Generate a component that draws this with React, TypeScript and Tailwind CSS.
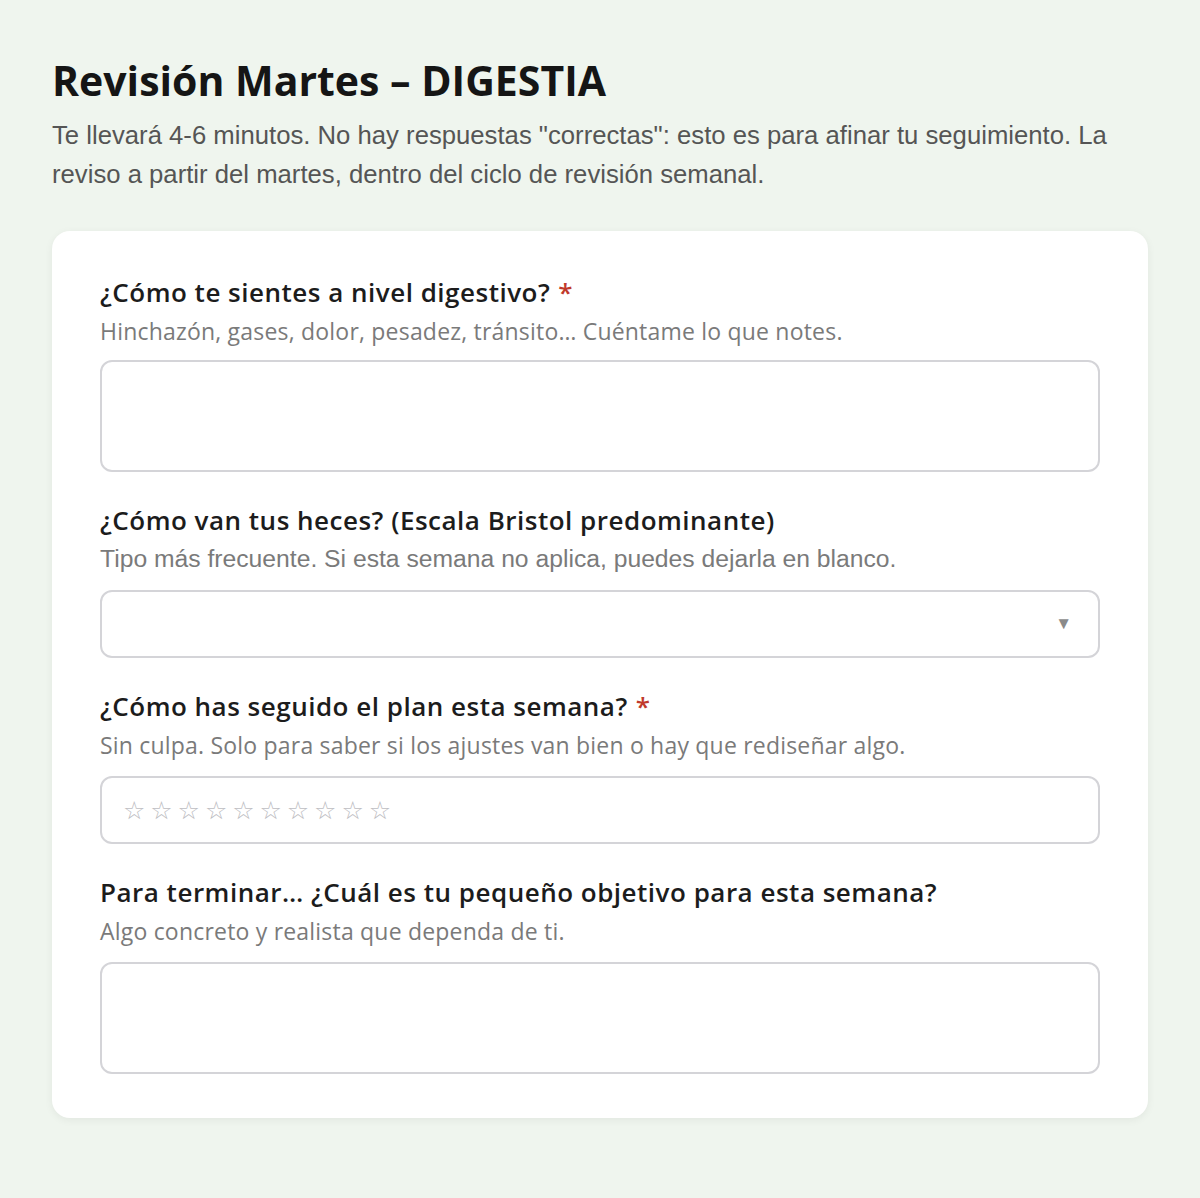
import React from "react";

const DM = { fontFamily: '"Open Sans", "Lato", sans-serif' };
const AR = { fontFamily: '"Liberation Sans", Arial, sans-serif' };

function Label({ text, required }: { text: string; required?: boolean }) {
  return (
    <div className="text-[26px] leading-[30px] font-semibold tracking-[0.5px] text-[#1c1c1c]" style={DM}>
      {text}
      {required && <span className="text-[#c0392b] ml-2">*</span>}
    </div>
  );
}

function Hint({ text, arial }: { text: string; arial?: boolean }) {
  return (
    <div
      className={
        arial
          ? "mt-[9px] text-[24.7px] leading-[30px] text-[#7a7a7a]"
          : "mt-[9px] text-[23px] leading-[30px] tracking-[0.2px] text-[#7a7a7a]"
      }
      style={arial ? AR : DM}
    >
      {text}
    </div>
  );
}

export default function App() {
  return (
    <div className="min-h-[1198px] w-full bg-[#eff5ee] px-[52px] pt-[52px] pb-[80px]">
      <h1 className="text-[41px] leading-[56px] font-bold text-[#151515]" style={DM}>
        Revisión Martes – DIGESTIA
      </h1>
      <p className="mt-[8px] text-[25.7px] leading-[39px] text-[#555555]" style={AR}>
        Te llevará 4-6 minutos. No hay respuestas "correctas": esto es para afinar tu seguimiento. La reviso a partir del martes, dentro del ciclo de revisión semanal.
      </p>
      <div className="mt-[37px] rounded-[18px] bg-white px-[48px] pt-[46px] pb-[44px] shadow-[0_2px_8px_rgba(0,0,0,0.06)] flex flex-col gap-[33px]">
        <div>
          <Label text="¿Cómo te sientes a nivel digestivo?" required />
          <Hint text="Hinchazón, gases, dolor, pesadez, tránsito… Cuéntame lo que notes." />
          <div className="mt-[14px] h-[112px] rounded-[12px] border-2 border-[#d4d4d8] bg-white" />
        </div>
        <div>
          <Label text="¿Cómo van tus heces? (Escala Bristol predominante)" />
          <Hint text="Tipo más frecuente. Si esta semana no aplica, puedes dejarla en blanco." arial />
          <div className="mt-[16px] h-[68px] rounded-[12px] border-2 border-[#d4d4d8] bg-white flex items-center justify-end pr-[26px]">
            <span className="text-[17px] text-[#8a8a8a]" style={AR}>▼</span>
          </div>
        </div>
        <div>
          <Label text="¿Cómo has seguido el plan esta semana?" required />
          <Hint text="Sin culpa. Solo para saber si los ajustes van bien o hay que rediseñar algo." />
          <div className="mt-[16px] h-[68px] rounded-[12px] border-2 border-[#d4d4d8] bg-white flex items-center pl-[21px]">
            {Array.from({ length: 10 }).map((_, i) => (
              <span key={i} className="w-[27.3px] text-[25px] leading-none text-[#bdbdc2]" style={{ fontFamily: '"DejaVu Sans", sans-serif' }}>
                ☆
              </span>
            ))}
          </div>
        </div>
        <div>
          <Label text="Para terminar… ¿Cuál es tu pequeño objetivo para esta semana?" />
          <Hint text="Algo concreto y realista que dependa de ti." />
          <div className="mt-[16px] h-[112px] rounded-[12px] border-2 border-[#d4d4d8] bg-white" />
        </div>
      </div>
    </div>
  );
}
